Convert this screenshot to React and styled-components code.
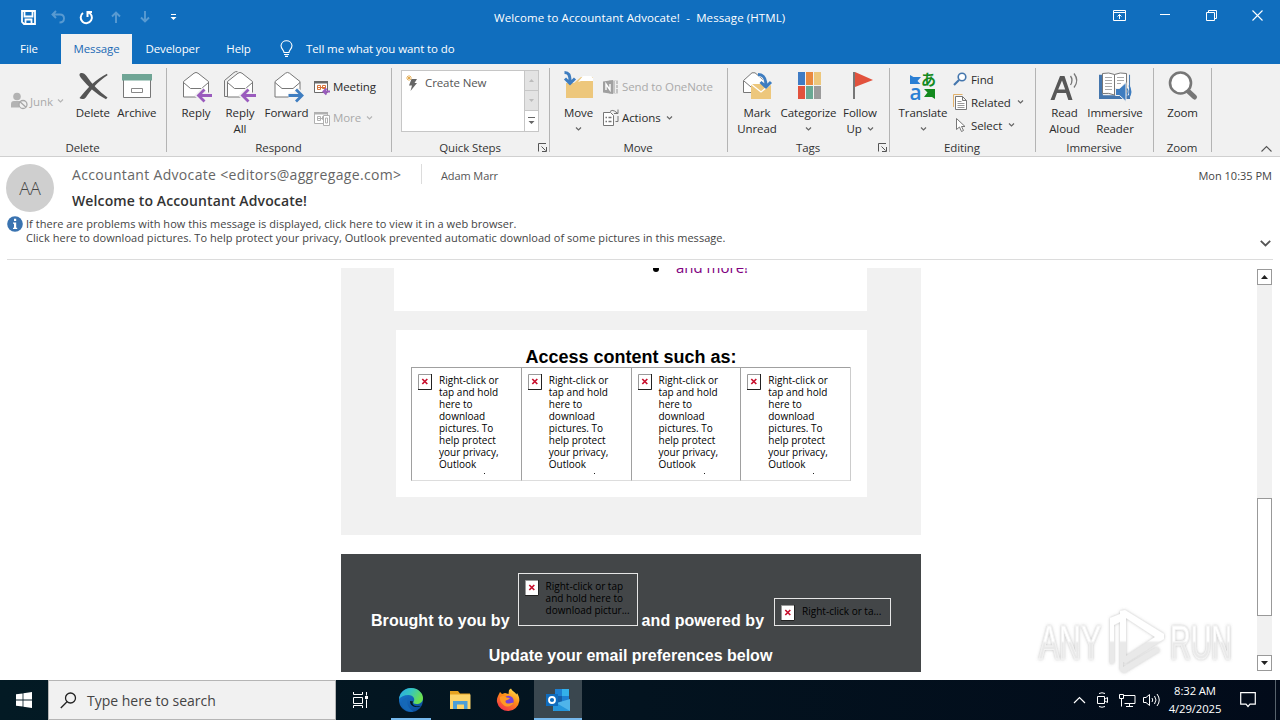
import React from 'react';
import styled, { createGlobalStyle } from 'styled-components';

const GlobalStyle = createGlobalStyle`
  * { box-sizing: border-box; }
  body {
    margin: 0;
    background: #fff;
    overflow: hidden;
    font-family: "Open Sans", "Noto Sans", sans-serif;
    font-size: 11.5px;
    letter-spacing: -0.1px;
    color: #333;
  }
  svg { display: block; flex: none; overflow: visible; }
`;

const Window = styled.div`
  width: 1280px;
  height: 720px;
  display: flex;
  flex-direction: column;
  overflow: hidden;
  white-space: nowrap;
`;

/* title bar and tabs */

const TitleBar = styled.div`
  height: 34px;
  flex: none;
  display: flex;
  background: #106ebe;
  color: #fff;
`;

const QuickAccess = styled.div`
  width: 494px;
  height: 34px;
  padding-left: 14px;
  display: flex;
  align-items: center;
`;

const QuickButton = styled.div`
  width: 29px;
  display: flex;
  justify-content: center;
  opacity: ${p => (p.$disabled ? 0.3 : 1)};
`;

const WindowTitle = styled.div`
  line-height: 35px;
  letter-spacing: 0.1px;
  white-space: pre;
`;

const Controls = styled.div`
  margin-left: auto;
  display: flex;
`;

const Control = styled.div`
  width: 46px;
  height: 30px;
  display: flex;
  align-items: center;
  justify-content: center;
`;

const Tabs = styled.div`
  height: 30px;
  flex: none;
  display: flex;
  background: #106ebe;
  color: #fff;
`;

const Tab = styled.div`
  width: ${p => p.$width}px;
  margin-right: ${p => p.$gap || 0}px;
  line-height: 30px;
  text-align: center;
  background: ${p => (p.$active ? '#f1f1f1' : 'transparent')};
  color: ${p => (p.$active ? '#1a6ab5' : '#fff')};
`;

const TellMe = styled.div`
  margin-left: 16px;
  padding-bottom: 1px;
  display: flex;
  align-items: center;
  gap: 13px;
`;

/* ribbon */

const Ribbon = styled.div`
  height: 93px;
  flex: none;
  display: flex;
  background: #f1f1f1;
  border-bottom: 1px solid #d0d0d0;
`;

const GroupBox = styled.div`
  width: ${p => p.$width}px;
  height: 92px;
  position: relative;
  display: flex;
  flex-direction: column;
  &::after {
    content: "";
    position: absolute;
    right: 0;
    top: 4px;
    width: 1px;
    height: 84px;
    background: #b4b4b4;
  }
`;

const GroupBody = styled.div`
  height: 76px;
  padding: 6px 0 0 ${p => p.$left}px;
  display: flex;
`;

const GroupLabel = styled.div`
  padding-right: 2px;
  line-height: 15px;
  text-align: center;
  color: #333;
`;

const Launcher = styled.div`
  position: absolute;
  right: 3px;
  bottom: 4px;
`;

const Big = styled.div`
  width: ${p => p.$width}px;
  display: flex;
  flex-direction: column;
  align-items: center;
  line-height: 16px;
  color: #2b2b2b;
  text-align: center;
  & > svg:first-child { margin-bottom: 3px; }
`;

const BigLine = styled.div`
  height: 16px;
  display: flex;
  align-items: center;
  gap: 5px;
`;

const Stack = styled.div`
  display: flex;
  flex-direction: column;
  gap: ${p => p.$gap || 0}px;
  padding: ${p => p.$top}px 0 0 ${p => p.$left || 0}px;
`;

const Small = styled.div`
  height: ${p => p.$height}px;
  display: flex;
  align-items: center;
  gap: ${p => p.$gap || 3}px;
  color: ${p => (p.$disabled ? '#aaa' : '#2b2b2b')};
  & > span + svg { margin-left: 2px; }
`;

const Gallery = styled.div`
  width: 138px;
  height: 62px;
  display: flex;
  background: #fff;
  border: 1px solid #c6c6c6;
`;

const GalleryItem = styled.div`
  flex: 1;
  height: 23px;
  padding-left: 3px;
  display: flex;
  align-items: center;
  gap: 7px;
  color: #555;
`;

const GalleryScroll = styled.div`
  width: 14px;
  border-left: 1px solid #c6c6c6;
`;

const GalleryArrow = styled.div`
  height: 20px;
  display: flex;
  align-items: center;
  justify-content: center;
  background: ${p => (p.$on ? '#fff' : '#e3e3e3')};
  border-bottom: ${p => (p.$on ? 0 : 1)}px solid #c6c6c6;
`;

const Collapse = styled.div`
  flex: 1;
  display: flex;
  align-items: flex-end;
  justify-content: flex-end;
  padding: 0 8px 4px 0;
`;

/* message header */

const Header = styled.div`
  height: 110px;
  flex: none;
  display: flex;
  flex-direction: column;
  padding: 7px 7px 0 6px;
`;

const HeaderTop = styled.div`
  height: 52px;
  display: flex;
`;

const Avatar = styled.div`
  width: 48px;
  height: 48px;
  border-radius: 50%;
  background: #cfcfcf;
  color: #444;
  font-size: 18px;
  font-weight: 300;
  line-height: 48px;
  letter-spacing: 0;
  text-align: center;
`;

const Subjects = styled.div`
  width: 349px;
  margin-left: 18px;
`;

const From = styled.div`
  font-size: 14px;
  letter-spacing: 0.33px;
  line-height: 22px;
  color: #666;
`;

const Subject = styled.div`
  margin-top: 4px;
  font-size: 14px;
  font-weight: 600;
  letter-spacing: 0.12px;
  line-height: 22px;
  color: #333;
`;

const Recipient = styled.div`
  height: 20px;
  padding-left: 19px;
  border-left: 1px solid #dcdcdc;
  font-size: 11px;
  line-height: 24px;
  color: #555;
`;

const Sent = styled.div`
  margin-left: auto;
  font-size: 11px;
  line-height: 24px;
  letter-spacing: 0;
  margin-right: 1px;
  color: #444;
`;

const InfoBar = styled.div`
  height: 44px;
  display: flex;
  margin-left: 1px;
  border-bottom: 1px solid #dcdcdc;
`;

const InfoText = styled.div`
  margin: 1px 0 0 3px;
  font-size: 11px;
  letter-spacing: 0.04px;
  line-height: 14px;
  color: #444;
`;

const Expand = styled.div`
  margin: 24px 2px 0 auto;
`;

/* reading pane */

const Pane = styled.div`
  height: 413px;
  flex: none;
  display: flex;
  padding-top: 1px;
`;

const Mail = styled.div`
  width: 580px;
  height: 404px;
  margin-left: 341px;
  display: flex;
  flex-direction: column;
  gap: 19px;
  overflow: hidden;
  font-family: "Liberation Sans", Arial, sans-serif;
  letter-spacing: 0;
`;

const MailBody = styled.div`
  height: 267px;
  flex: none;
  background: #f1f1f1;
  display: flex;
  flex-direction: column;
  gap: 19px;
`;

const ListCard = styled.div`
  width: 473px;
  height: 43px;
  margin-left: 53px;
  background: #fff;
  overflow: hidden;
`;

const ListItem = styled.div`
  margin: -12px 0 0 259px;
  display: flex;
  align-items: center;
  gap: 17px;
  font-family: "Open Sans", sans-serif;
  font-size: 15px;
  line-height: 23px;
  color: #800080;
  &::before {
    content: "";
    width: 6px;
    height: 6px;
    margin-top: 2px;
    border-radius: 50%;
    background: #000;
  }
`;

const ContentCard = styled.div`
  width: 471px;
  height: 167px;
  margin-left: 55px;
  padding: 16px 16px 0 15px;
  background: #fff;
`;

const ContentTitle = styled.div`
  height: 21px;
  text-align: center;
  font-size: 18px;
  font-weight: bold;
  line-height: 23px;
  color: #000;
`;

const Pictures = styled.div`
  height: 114px;
  display: flex;
  border-right: 1px solid #ccc;
`;

const Picture = styled.div`
  width: 110px;
  position: relative;
  padding: 6px 0 0 6px;
  display: flex;
  gap: 7px;
  border: 1px solid #a0a0a0;
  border-right: 0;
  border-bottom-color: #ddd;
`;

const ClippedDot = styled.i`
  position: absolute;
  left: 72px;
  top: 105px;
  width: 1px;
  height: 1px;
  background: #222;
`;

const PictureText = styled.div`
  font-family: "Open Sans", sans-serif;
  font-size: 10px;
  line-height: 12px;
  color: #000;
`;

const Footer = styled.div`
  height: 118px;
  flex: none;
  padding-top: 19px;
  background: #434648;
  color: #fff;
  font-size: 16px;
  font-weight: bold;
`;

const FooterLine = styled.div`
  height: 53px;
  padding-left: 30px;
  display: flex;
  align-items: flex-end;
`;

const FooterText = styled.div`
  line-height: 20px;
  margin-bottom: -5px;
  letter-spacing: 0.05px;
`;

const FooterPicture = styled.div`
  width: ${p => p.$width}px;
  height: ${p => p.$height}px;
  margin: 0 ${p => p.$after || 0}px 0 ${p => p.$before}px;
  padding: 6px 0 0 6px;
  display: flex;
  gap: 7px;
  font-weight: normal;
  border: 1px solid #e6e6e6;
`;

const Update = styled.div`
  margin-top: 20px;
  padding-right: 1px;
  text-align: center;
  line-height: 20px;
`;

const ScrollBar = styled.div`
  width: 15px;
  height: 402px;
  margin: 1px 8px 0 auto;
  display: flex;
  flex-direction: column;
  background: #f1f1f1;
`;

const ScrollArrow = styled.div`
  height: 16px;
  display: flex;
  align-items: center;
  justify-content: center;
  background: #fff;
  border: 1px solid #999;
`;

const Thumb = styled.div`
  height: 118px;
  margin: 213px 0 auto;
  background: #fff;
  border: 1px solid #999;
`;

const Watermark = styled.div`
  position: absolute;
  left: 1030px;
  top: 605px;
`;

/* taskbar */

const Taskbar = styled.div`
  height: 40px;
  flex: none;
  display: flex;
  background: linear-gradient(90deg, #031a24, #03131f 50%, #020b1a);
  color: #fff;
`;

const Start = styled.div`
  width: 48px;
  display: flex;
  align-items: center;
  justify-content: center;
`;

const Search = styled.div`
  width: 288px;
  padding-left: 11px;
  display: flex;
  align-items: center;
  gap: 10px;
  background: #f1f1f1;
  border: 1px solid #b5b5b5;
  font-size: 14px;
  letter-spacing: 0;
  color: #444;
`;

const TaskButton = styled.div`
  width: ${p => p.$width}px;
  display: flex;
  align-items: center;
  justify-content: center;
  background: ${p => (p.$active ? '#3a474f' : 'transparent')};
  border-bottom: 2px solid ${p => (p.$running ? '#76b9ed' : 'transparent')};
  border-top: 2px solid transparent;
  margin: 0 ${p => p.$inset || 0}px;
`;

const Tray = styled.div`
  margin-left: auto;
  display: flex;
  align-items: center;
`;

const TrayIcon = styled.div`
  width: 24px;
  display: flex;
  justify-content: center;
`;

const Clock = styled.div`
  width: 64px;
  font-size: 11.3px;
  line-height: 18px;
  text-align: center;
`;

const Notifications = styled.div`
  width: 41px;
  margin-right: 7px;
  height: 40px;
  display: flex;
  align-items: center;
  justify-content: center;
`;

const ShowDesktop = styled.div`
  width: 5px;
  height: 40px;
  border-left: 1px solid #57626c;
`;

/* icons */

const Icon = ({ w = 32, h = w, children, ...rest }) => (
  <svg width={w} height={h} viewBox={`0 0 ${w} ${h}`} fill="none" {...rest}>{children}</svg>
);

const Chevron = ({ color = '#666' }) => (
  <Icon w={7} h={4} stroke={color} strokeWidth="1.2"><path d="M1 .5 3.5 3 6 .5" /></Icon>
);

const Launch = () => (
  <Icon w={9} h={9} stroke="#555"><path d="M.5 8.500V.5H8M3.500 3.500l4 4M8.500 4v4.500H4" /></Icon>
);

const Missing = () => (
  <Icon w={14} h={16}>
    <path fill="#fff" stroke="#999" d="M.5.5h13v15H.5z" />
    <path stroke="#222" d="M0 15.500h13.500V0" />
    <path stroke="#c8102e" strokeWidth="1.700" d="m4.300 5 5 5m0-5-5 5" />
  </Icon>
);

const Envelope = ({ dx = 0 }) => (
  <g transform={`translate(${dx})`} stroke="#777">
    <path fill="#fff" d="M3.500 11.500 14 3.200q2-1.500 4 0l10.500 8.300v15.500h-25z" />
    <path d="M3.500 12.500 10.500 18.500h11l7-6" />
  </g>
);

const DeleteIcon = () => (
  <Icon>
    <path fill="#555" d="M3 3.500C5.500 2.500 7.500 3.500 9.500 6c5.500 8 12.500 15.500 21 21.500l-1.500 1.800C20 24.500 11.500 17 4 8 2.500 6 2 4.500 3 3.500z" />
    <path fill="#555" d="M30.500 5.200c-9 5.500-16 14-21.500 22-1.500 2.300-5 2.300-6.500.8C10 18.500 19 9 30 3.800z" />
  </Icon>
);

const ArchiveIcon = () => (
  <Icon>
    <path fill="#fff" stroke="#777" d="M2.500 9.500h27v18h-27z" />
    <path fill="#6fa595" d="M1 4h30v6.500H1z" />
    <path stroke="#888" d="M10.500 18.500h11v4h-11z" />
  </Icon>
);

const Arrow = ({ d, color }) => (
  <>
    <path stroke="#f1f1f1" strokeWidth="6" d={d} />
    <path stroke={color} strokeWidth="2.800" d={d} />
  </>
);

const ReplyIcon = () => (
  <Icon><Envelope /><Arrow color="#9a5bbd" d="M32 25.500H18.500m6-6-6 6 6 6" /></Icon>
);

const ReplyAllIcon = () => (
  <Icon>
    <path stroke="#777" d="M.5 24V10.500L10 2.500q1.500-1.300 3.500-.8M.5 24v2.500h3" />
    <Envelope />
    <Arrow color="#9a5bbd" d="M32 25.500H18.500m6-6-6 6 6 6" />
  </Icon>
);

const ForwardIcon = () => (
  <Icon><Envelope dx={0.5} /><Arrow color="#3e7dc0" d="M17.500 25.500H31m-6-6 6 6-6 6" /></Icon>
);

const MeetingIcon = ({ disabled }) => {
  const c = disabled ? '#b0b0b0' : '#6a6a6a';
  return (
    <Icon w={16}>
      <path stroke={c} fill="#fff" d="M.5 2.500h13v11H.5z" />
      <path fill={c} d="M0 2h14v2.500H0z" />
      <path stroke={disabled ? c : '#d9743a'} d="M3.500 6.500h3v4h-3zM8.500 6.500h3v3h-3zM3.500 8.500h8" />
      {disabled
        ? <path fill="#fff" stroke={c} d="M9.500 5.500h6v10h-6zM11.500 8v5h2V8z" />
        : <path stroke="#9a5bbd" strokeWidth="2" d="M16 12.500H9.500m3-3-3 3 3 3" />}
    </Icon>
  );
};

const JunkIcon = () => (
  <Icon w={17} h={18}>
    <circle cx="6" cy="4.500" r="3.800" fill="#b3b3b3" />
    <path fill="#b3b3b3" d="M0 15.500V12q0-3 3-3h6q1.500 0 2 1-3 2-3 5.500z" />
    <circle cx="12" cy="12.500" r="4" fill="#f1f1f1" stroke="#a8a8a8" strokeWidth="1.300" />
    <path stroke="#a8a8a8" strokeWidth="1.300" d="m9 9.700 6 5.600" />
  </Icon>
);

const BoltIcon = () => (
  <Icon w={13} h={18}>
    <path fill="#666" d="M6.500 5H12L9.500 9H12l-6.500 8L7 11.500H4z" />
    <path stroke="#dfa23f" d="M4 1v6M1 4h6M2 2l4 4m0-4L2 6" strokeWidth=".8" />
  </Icon>
);

const MoveIcon = () => (
  <Icon>
    <path fill="#edc77c" d="M3 28V13h8l7-6h12v21z" />
    <path fill="#fff" d="m15 12 5-6h8l2 2v3H18z" />
    <path fill="#edc77c" d="M15 12h15v3H12z" />
    <path stroke="#3e7dc0" strokeWidth="3" d="M1.500 2.500c4 0 5.500 2 5.500 9M2 8.500l5 5 5-5" />
  </Icon>
);

const OneNoteIcon = () => (
  <Icon w={16}>
    <path fill="#c4c4c4" d="M6 1.500h9v13H6z" />
    <path stroke="#eee" d="M12.500 2v12M12 5.500h3M12 9.500h3" />
    <path fill="#a0a0a0" d="M0 2.500 10 1v14L0 13.500z" />
    <path stroke="#fff" strokeWidth="1.400" d="M3 11V5l4 6V5" />
  </Icon>
);

const ActionsIcon = () => (
  <Icon w={16}>
    <path fill="#fff" stroke="#777" d="M.5 2.500h7l3 3v10H.5z" />
    <path stroke="#777" d="M2.500 7.500h1.500m-1.500 4h1.500M5.500 7.500h3m-3 4h3" strokeWidth="1.500" />
    <path stroke="#777" d="M7 1.500Q9-.5 11.500 1l3.500 2.500M15-.5v4h-4M12.500 11.500h2.500V6" />
  </Icon>
);

const UnreadIcon = () => (
  <Icon>
    <path fill="#fff" stroke="#777" d="M10 22.500H2.500V10.500L11 2.800h3l9 7.700" />
    <path stroke="#777" d="m3 11 7 6" />
    <path fill="#edc77c" d="M10 14h20v15H10z" />
    <path stroke="#fff" strokeWidth="1.300" d="m10 14 10 8 10-8" />
    <path stroke="#f1f1f1" strokeWidth="5" d="M18 4.500c5 0 7 3 7 9" />
    <path stroke="#3e7dc0" strokeWidth="3" d="M17 4.500c5.500 0 8 3 8 12M19.500 12l5.500 5 5-5" />
  </Icon>
);

const CategorizeIcon = () => (
  <Icon>
    <path fill="#3f7bc4" d="M5 2h7v13H5z" />
    <path fill="#e9893f" d="M13 2h7v13h-7z" />
    <path fill="#edc77c" d="M21 2h7v13h-7z" />
    <path fill="#e2523d" d="M5 16h7v13H5z" />
    <path fill="#69a893" d="M13 16h7v13h-7z" />
    <path fill="#9b9b9b" d="M21 16h7v13h-7z" />
  </Icon>
);

const FlagIcon = () => (
  <Icon>
    <path fill="#e2523d" d="m11 2 18 8-18 7z" />
    <path fill="#777" d="M9 2h2v27H9z" />
  </Icon>
);

const TranslateIcon = () => (
  <Icon>
    <path fill="#2a7fd4" d="M3 5 6.500 7H14l-3.500 4 3 3H3z" />
    <text x="14" y="15" fontSize="15" fontWeight="700" fontFamily='"Noto Sans CJK JP", sans-serif' fill="#138a1e">あ</text>
    <text x="2.500" y="29.500" fontSize="22" fontWeight="600" fill="#2a7fd4" textLength="12" lengthAdjust="spacingAndGlyphs">a</text>
    <path fill="#138a1e" d="M17 19h11v10l-3-2h-8l3.500-4.500z" />
  </Icon>
);

const FindIcon = () => (
  <Icon w={14}>
    <circle cx="9" cy="5" r="3.800" stroke="#4476ad" strokeWidth="1.600" fill="#fff" />
    <path stroke="#4476ad" strokeWidth="2.200" d="m6 8-5 5" />
  </Icon>
);

const RelatedIcon = () => (
  <Icon w={14} h={16}>
    <path stroke="#e3b26b" d="M.5 13V.5h9" />
    <path fill="#fff" stroke="#777" d="M2.500 2.500h7l4 4v9h-11zM9.500 2.500v4h4" />
    <path stroke="#999" d="M4.500 7.500h4m-4 2h7m-7 2h7m-7 2h7" />
  </Icon>
);

const SelectIcon = () => (
  <Icon w={14} h={16}><path fill="#fff" stroke="#777" d="M3.500 1.500v11l3-2.500 2 4.500 2-1-2-4h3.500z" /></Icon>
);

const ReadAloudIcon = () => (
  <Icon>
    <path fill="#575757" fillRule="evenodd" d="m11 6h4.500l8 24h-4.200l-2.300-7H8l-2.500 7H1.500zM13 10.500 9.200 19.500h7z" />
    <path stroke="#777" strokeWidth="1.300" d="M21.500 6q3 4 0 9M25 3.500q5.500 7 0 14" />
  </Icon>
);

const ReaderIcon = () => (
  <Icon>
    <path fill="#4476ad" d="M0 5h4v21h27V5h1v25H0z" transform="scale(.97)" />
    <path fill="#fff" stroke="#777" d="M3.500 3.500q6.500-1.500 12 1 5.500-2.500 12-1v20q-6.500-1-12 1.500-5.500-2.500-12-1.500zM15.500 4.500V25" />
    <path stroke="#aaa" d="M6 7.500h7m-7 3h7m-7 3h7m-7 3h7m-7 3h7M18 7.500h7m-7 3h7m-7 3h4" />
    <path fill="#3e7dc0" stroke="#f1f1f1" d="M16.500 18.500h4l6.500-6v19l-6.500-6h-4z" />
    <path stroke="#3e7dc0" strokeWidth="1.300" d="M28 18.500q2 3 0 6.500M30 15.500q3.500 6 0 12" />
  </Icon>
);

const ZoomIcon = () => (
  <Icon>
    <path stroke="#777" strokeWidth="5" strokeLinecap="round" d="m20.500 20.500 7 6.500" />
    <circle cx="13.500" cy="13" r="10.500" fill="#fff" stroke="#777" strokeWidth="2.600" />
  </Icon>
);

const EdgeIcon = () => (
  <Icon w={26}>
    <defs>
      <linearGradient id="edgeTop" x1="0" y1="0" x2="1" y2=".4">
        <stop offset="0" stopColor="#2aa7e8" /><stop offset=".5" stopColor="#35c5c0" /><stop offset="1" stopColor="#6be04f" />
      </linearGradient>
      <linearGradient id="edgeLow" x1="0" y1="0" x2=".6" y2="1">
        <stop offset="0" stopColor="#1b7fd6" /><stop offset="1" stopColor="#0d4f9e" />
      </linearGradient>
    </defs>
    <circle cx="13" cy="13" r="12" fill="url(#edgeLow)" />
    <path fill="url(#edgeTop)" d="M1 12C2 5 7 1 13 1c7 0 12 5 12 10 0 4-3 6-6.500 6-2.500 0-3.500-1-3-2 2-3 0-7-5-7C6 8 2.500 10 1 12z" />
    <path fill="#031a24" d="M12 14c0 4 3 6 7 6 2 0 3.500-.5 4.500-1-1 .2-8 1.500-9-3 0-.8.500-1 .8-1.500z" />
    <path fill="#1568b8" d="M10.500 11c-3 3-1 10 5 13.500C9 26 3 21 4 15c.6-3 3.500-5 6.500-4z" />
  </Icon>
);

const ExplorerIcon = () => (
  <Icon w={24}>
    <path fill="#e5a220" d="M2 3h8l2 2.500h10V8H2z" />
    <path fill="#fcd46a" d="M2 6.500h20.500V21H2z" />
    <path fill="#4b9fd8" d="M5 13h14.500v8H16v-4.500H9V21H5z" />
    <path fill="#fcd46a" d="M9.500 17h6v4h-6z" />
  </Icon>
);

const FirefoxIcon = () => (
  <Icon w={24}>
    <defs>
      <linearGradient id="fox" x1=".8" y1="0" x2=".2" y2="1">
        <stop offset="0" stopColor="#ffe14d" /><stop offset=".45" stopColor="#ff8a16" /><stop offset="1" stopColor="#f22c50" />
      </linearGradient>
    </defs>
    <path fill="url(#fox)" d="M2 8 4 4l2 2 3-1 3.500 1L13 2l2-1.500c1 2.500 4 3.500 5.500 6L21 5c2 3 2.500 5.500 2.300 8A11.300 11.300 0 0 1 1 14c-.3-2.300 0-4 1-6z" />
    <circle cx="12.500" cy="13" r="5.200" fill="#7641d8" />
    <path fill="#ff9a24" d="M4 9c3-1.500 5-1 6.500.5L14 10c-1 1.500-3 2-4 2.500s-.5 2.500 1.500 3c2.500.5 4-1.500 6-.5-2 4-7 4.500-10 2S3.500 11.500 4 9z" />
  </Icon>
);

const OutlookIcon = () => (
  <Icon w={26} h={24}>
    <path fill="#1d80d3" d="M10 1h14v15H10z" />
    <path fill="#33b1ea" d="M17 1h7v7h-7z" />
    <path fill="#155fa9" d="M10 8h7v8h-7z" />
    <path fill="#4fb4ea" d="m8 16 17-5v12H8z" />
    <path fill="#2596dc" d="m8 13 17 10H9q-1 0-1-1z" />
    <path fill="#0f6cbd" d="M1 6h12v12H1z" />
    <circle cx="7" cy="12" r="3" stroke="#fff" strokeWidth="1.800" />
  </Icon>
);

const AnyRun = () => (
  <Icon w={210} h={74} fontFamily='"Liberation Sans", sans-serif'>
    <defs>
      <linearGradient id="mark" x1="0" y1="0" x2="0" y2="1">
        <stop offset=".48" stopColor="#fff" /><stop offset=".52" stopColor="#e9e9e9" />
      </linearGradient>
      <filter id="halo" x="-10%" y="-20%" width="120%" height="140%">
        <feDropShadow dx="0" dy="0" stdDeviation="1.800" floodColor="#777" floodOpacity=".5" />
      </filter>
    </defs>
    <g filter="url(#halo)" fill="url(#mark)">
      <text x="9" y="54" fontSize="49" textLength="62" lengthAdjust="spacingAndGlyphs" stroke="#f4f4f4">ANY</text>
      <text x="140" y="54" fontSize="49" textLength="62" lengthAdjust="spacingAndGlyphs" stroke="#f4f4f4">RUN</text>
      <path fillRule="evenodd" d="M80 13l10-4V6l5-1 39 24v5L96 58l-3-1v5l34-20 3 4-36 22-4-3V17l-6 3v38l-4 1zM96 13v38l29-19z" />
    </g>
  </Icon>
);

const Group = ({ width, left, label, launcher, children }) => (
  <GroupBox $width={width}>
    <GroupBody $left={left}>{children}</GroupBody>
    <GroupLabel>{label}</GroupLabel>
    {launcher && <Launcher><Launch /></Launcher>}
  </GroupBox>
);

const BigButton = ({ icon, width, lines, drop }) => (
  <Big $width={width}>
    {icon}
    {lines.map((line, i) => (
      <BigLine key={i}>
        {line}
        {drop && i === lines.length - 1 && <Chevron />}
      </BigLine>
    ))}
  </Big>
);

const SmallButton = ({ icon, height, label, drop, disabled, gap }) => (
  <Small $height={height} $disabled={disabled} $gap={gap}>
    {icon}
    <span>{label}</span>
    {drop && <Chevron color={disabled ? '#b5b5b5' : '#666'} />}
  </Small>
);

const pictureText = ['Right-click or', 'tap and hold', 'here to', 'download', 'pictures. To', 'help protect', 'your privacy,', 'Outlook'];

const Lines = ({ rows }) => (
  <PictureText>{rows.map(row => <div key={row}>{row}</div>)}</PictureText>
);

export default function App() {
  return (
    <Window>
      <GlobalStyle />
      <TitleBar>
        <QuickAccess>
          <QuickButton>
            <Icon w={15} h={15} stroke="#fff" strokeWidth="1.800">
              <path d="M1 1h13v13H3l-2-2zM3.500 1v5.500h8V1M4.500 14v-4.500h6V14" />
            </Icon>
          </QuickButton>
          <QuickButton $disabled>
            <Icon w={14} h={14} stroke="#fff" strokeWidth="1.900"><path d="M5 1 1.500 4.500 5 8M2 4.500h7q4 0 4 4t-4.500 4" /></Icon>
          </QuickButton>
          <QuickButton>
            <Icon w={15} h={15} stroke="#fff" strokeWidth="2"><path d="M9 2.200A5.600 5.600 0 1 1 4 3M8.500 7V1.900H13" /></Icon>
          </QuickButton>
          <QuickButton $disabled>
            <Icon w={12} h={12} stroke="#fff" strokeWidth="1.900"><path d="M6 12V1.500M2 5.500l4-4 4 4" /></Icon>
          </QuickButton>
          <QuickButton $disabled>
            <Icon w={12} h={12} stroke="#fff" strokeWidth="1.900"><path d="M6 0v10.500M2 6.500l4 4 4-4" /></Icon>
          </QuickButton>
          <QuickButton>
            <Icon w={7} h={7}><path fill="#fff" d="M1 0h5v1H1zM.5 3h6l-3 3z" /></Icon>
          </QuickButton>
        </QuickAccess>
        <WindowTitle>{'Welcome to Accountant Advocate!  -  Message (HTML)'}</WindowTitle>
        <Controls>
          <Control><Icon w={13} h={11} stroke="#fff"><path d="M.5.500h12v10H.5zM.5 2.500h12M6.500 9V4.500M4.500 6.500l2-2 2 2" /></Icon></Control>
          <Control><Icon w={10} h={10} stroke="#fff"><path d="M0 4.500h10" /></Icon></Control>
          <Control><Icon w={11} h={11} stroke="#fff"><path d="M.5 2.500h8v8h-8zM2.500 2V.5h8v8H9" /></Icon></Control>
          <Control><Icon w={11} h={11} stroke="#fff" strokeWidth="1.100"><path d="m.5.5 10 10m0-10-10 10" /></Icon></Control>
        </Controls>
      </TitleBar>
      <Tabs>
        <Tab $width={58} $gap={3}>File</Tab>
        <Tab $width={71} $active>Message</Tab>
        <Tab $width={81}>Developer</Tab>
        <Tab $width={51}>Help</Tab>
        <TellMe>
          <Icon w={13} h={17} stroke="#fff" strokeWidth="1.100">
            <path d="M4 12.500c0-2.500-3-3.500-3-7A5.400 5.400 0 0 1 6.500.8 5.400 5.400 0 0 1 12 5.500c0 3.500-3 4.500-3 7zM4 14.500h5M5 16.400h3" />
          </Icon>
          Tell me what you want to do
        </TellMe>
      </Tabs>

      <Ribbon>
        <Group width={167} left={11} label="Delete">
          <Stack $top={22}>
            <SmallButton icon={<JunkIcon />} height={18} gap={2} label="Junk" drop disabled />
          </Stack>
          <Stack $top={0} $left={7} />
          <BigButton icon={<DeleteIcon />} width={44} lines={['Delete']} />
          <BigButton icon={<ArchiveIcon />} width={44} lines={['Archive']} />
        </Group>
        <Group width={225} left={7} label="Respond">
          <BigButton icon={<ReplyIcon />} width={44} lines={['Reply']} />
          <BigButton icon={<ReplyAllIcon />} width={44} lines={['Reply', 'All']} />
          <BigButton icon={<ForwardIcon />} width={49} lines={['Forward']} />
          <Stack $top={1} $left={3}>
            <SmallButton icon={<MeetingIcon />} height={31} label="Meeting" />
            <SmallButton icon={<MeetingIcon disabled />} height={31} label="More" drop disabled />
          </Stack>
        </Group>
        <Group width={158} left={9} label="Quick Steps" launcher>
          <Gallery>
            <GalleryItem><BoltIcon />Create New</GalleryItem>
            <GalleryScroll>
              <GalleryArrow><Icon w={5} h={3}><path fill="#bbb" d="M0 3h5L2.500 0z" /></Icon></GalleryArrow>
              <GalleryArrow><Icon w={5} h={3}><path fill="#bbb" d="M0 0h5L2.500 3z" /></Icon></GalleryArrow>
              <GalleryArrow $on><Icon w={7} h={8}><path fill="#666" d="M0 0h7v1H0zM.5 4h6l-3 3z" /></Icon></GalleryArrow>
            </GalleryScroll>
          </Gallery>
        </Group>
        <Group width={178} left={8} label="Move">
          <BigButton icon={<MoveIcon />} width={41} lines={['Move', '']} drop />
          <Stack $top={1} $left={4}>
            <SmallButton icon={<OneNoteIcon />} height={31} label="Send to OneNote" disabled />
            <SmallButton icon={<ActionsIcon />} height={31} label="Actions" drop />
          </Stack>
        </Group>
        <Group width={162} left={8} label="Tags" launcher>
          <BigButton icon={<UnreadIcon />} width={42} lines={['Mark', 'Unread']} />
          <BigButton icon={<CategorizeIcon />} width={61} lines={['Categorize', '']} drop />
          <BigButton icon={<FlagIcon />} width={42} lines={['Follow', 'Up']} drop />
        </Group>
        <Group width={146} left={9} label="Editing">
          <BigButton icon={<TranslateIcon />} width={48} lines={['Translate', '']} drop />
          <Stack $top={0} $left={6} $gap={5}>
            <SmallButton icon={<FindIcon />} height={18} gap={4} label="Find" />
            <SmallButton icon={<RelatedIcon />} height={18} gap={4} label="Related" drop />
            <SmallButton icon={<SelectIcon />} height={18} gap={4} label="Select" drop />
          </Stack>
        </Group>
        <Group width={118} left={7} label="Immersive">
          <BigButton icon={<ReadAloudIcon />} width={43} lines={['Read', 'Aloud']} />
          <BigButton icon={<ReaderIcon />} width={58} lines={['Immersive', 'Reader']} />
        </Group>
        <Group width={58} left={6} label="Zoom">
          <BigButton icon={<ZoomIcon />} width={45} lines={['Zoom']} />
        </Group>
        <Collapse><Icon w={11} h={6} stroke="#555" strokeWidth="1.100"><path d="M.5 5.500l5-5 5 5" /></Icon></Collapse>
      </Ribbon>

      <Header>
        <HeaderTop>
          <Avatar>AA</Avatar>
          <Subjects>
            <From>{'Accountant Advocate <editors@aggregage.com>'}</From>
            <Subject>Welcome to Accountant Advocate!</Subject>
          </Subjects>
          <Recipient>Adam Marr</Recipient>
          <Sent>Mon 10:35 PM</Sent>
        </HeaderTop>
        <InfoBar>
          <Icon w={16}>
            <circle cx="8" cy="8" r="7.800" fill="#3a73b0" />
            <path fill="#fff" d="M7 2.800h2.200V5H7zM6 6.500h3.200v5.300h1V13H6v-1.200h1V7.700H6z" />
          </Icon>
          <InfoText>
            <div>If there are problems with how this message is displayed, click here to view it in a web browser.</div>
            <div>Click here to download pictures. To help protect your privacy, Outlook prevented automatic download of some pictures in this message.</div>
          </InfoText>
          <Expand><Icon w={11} h={7} stroke="#555" strokeWidth="1.800"><path d="m.8.8 4.700 4.700L10.200.8" /></Icon></Expand>
        </InfoBar>
      </Header>

      <Pane>
        <Mail>
          <MailBody>
            <ListCard><ListItem>and more!</ListItem></ListCard>
            <ContentCard>
              <ContentTitle>Access content such as:</ContentTitle>
              <Pictures>
                {[1, 2, 3, 4].map(n => (
                  <Picture key={n}>
                    <Missing />
                    <Lines rows={pictureText} />
                    <ClippedDot />
                  </Picture>
                ))}
              </Pictures>
            </ContentCard>
          </MailBody>
          <Footer>
            <FooterLine>
              <FooterText>Brought to you by</FooterText>
              <FooterPicture $width={120} $height={53} $before={8} $after={4}>
                <Missing />
                <Lines rows={['Right-click or tap', 'and hold here to', 'download pictur...']} />
              </FooterPicture>
              <FooterText>and powered by</FooterText>
              <FooterPicture $width={117} $height={28} $before={10}>
                <Missing />
                <Lines rows={['Right-click or ta...']} />
              </FooterPicture>
            </FooterLine>
            <Update>Update your email preferences below</Update>
          </Footer>
        </Mail>
        <ScrollBar>
          <ScrollArrow><Icon w={7} h={4}><path fill="#222" d="M0 4h7L3.500 0z" /></Icon></ScrollArrow>
          <Thumb />
          <ScrollArrow><Icon w={7} h={4}><path fill="#222" d="M0 0h7L3.500 4z" /></Icon></ScrollArrow>
        </ScrollBar>
      </Pane>

      <Taskbar>
        <Start>
          <Icon w={16}><path fill="#fff" d="M0 2.300 6.600 1.400v6.200H0zM7.400 1.300 16 0v7.600H7.400zM0 8.400h6.600v6.200L0 13.700zM7.400 8.400H16V16l-8.600-1.300z" /></Icon>
        </Start>
        <Search>
          <Icon w={17} h={17} stroke="#222" strokeWidth="1.300"><circle cx="10.500" cy="6" r="5" /><path d="M7 9.800.8 16" /></Icon>
          Type here to search
        </Search>
        <TaskButton $width={48}>
          <Icon w={17} h={16} stroke="#fff">
            <path d="M1.500 0v2.500h9V0M1.500 5.500h9v6h-9zM1.500 16v-2.500h9V16M14.500 0v3.500m0 4V16" /><path fill="#fff" stroke="none" d="M13 4h3v3h-3z" />
          </Icon>
        </TaskButton>
        <TaskButton $width={40} $inset={7} $running><EdgeIcon /></TaskButton>
        <TaskButton $width={44}><ExplorerIcon /></TaskButton>
        <TaskButton $width={52}><FirefoxIcon /></TaskButton>
        <TaskButton $width={48} $active $running><OutlookIcon /></TaskButton>
        <Tray>
          <TrayIcon><Icon w={13} h={8} stroke="#fff" strokeWidth="1.200"><path d="m1 7 5.500-5.500L12 7" /></Icon></TrayIcon>
          <TrayIcon>
            <Icon w={12} h={16} stroke="#fff"><path d="M.5 4.500h7v7h-7zM8 7l2.500-1.500v5L8 9M2 1.500q3-1.500 6 0M2 14.500q3 1.500 6 0" /></Icon>
          </TrayIcon>
          <TrayIcon>
            <Icon w={17} h={15} stroke="#fff"><path d="M5 2.500h11v8H5.500M10.500 11v2.500M7 13.500h7M.5 1.500h4v4h-4zM2.500 5.500v8" /></Icon>
          </TrayIcon>
          <TrayIcon>
            <Icon w={17} h={14} stroke="#fff"><path d="M.5 4.500h2.500l3.500-3v11L3 9.500H.5zM9 5q1.500 2 0 4M11.500 3q3 4 0 8M14 1q4.500 6 0 12" /></Icon>
          </TrayIcon>
          <Clock>
            <div>8:32 AM</div>
            <div>4/29/2025</div>
          </Clock>
          <Notifications>
            <Icon w={16} h={16} stroke="#fff" strokeWidth="1.200"><path d="M.7.700h14.600v11.500H10L8 14.500l-2-2.300H.7z" /></Icon>
          </Notifications>
          <ShowDesktop />
        </Tray>
      </Taskbar>
      <Watermark><AnyRun /></Watermark>
    </Window>
  );
}
